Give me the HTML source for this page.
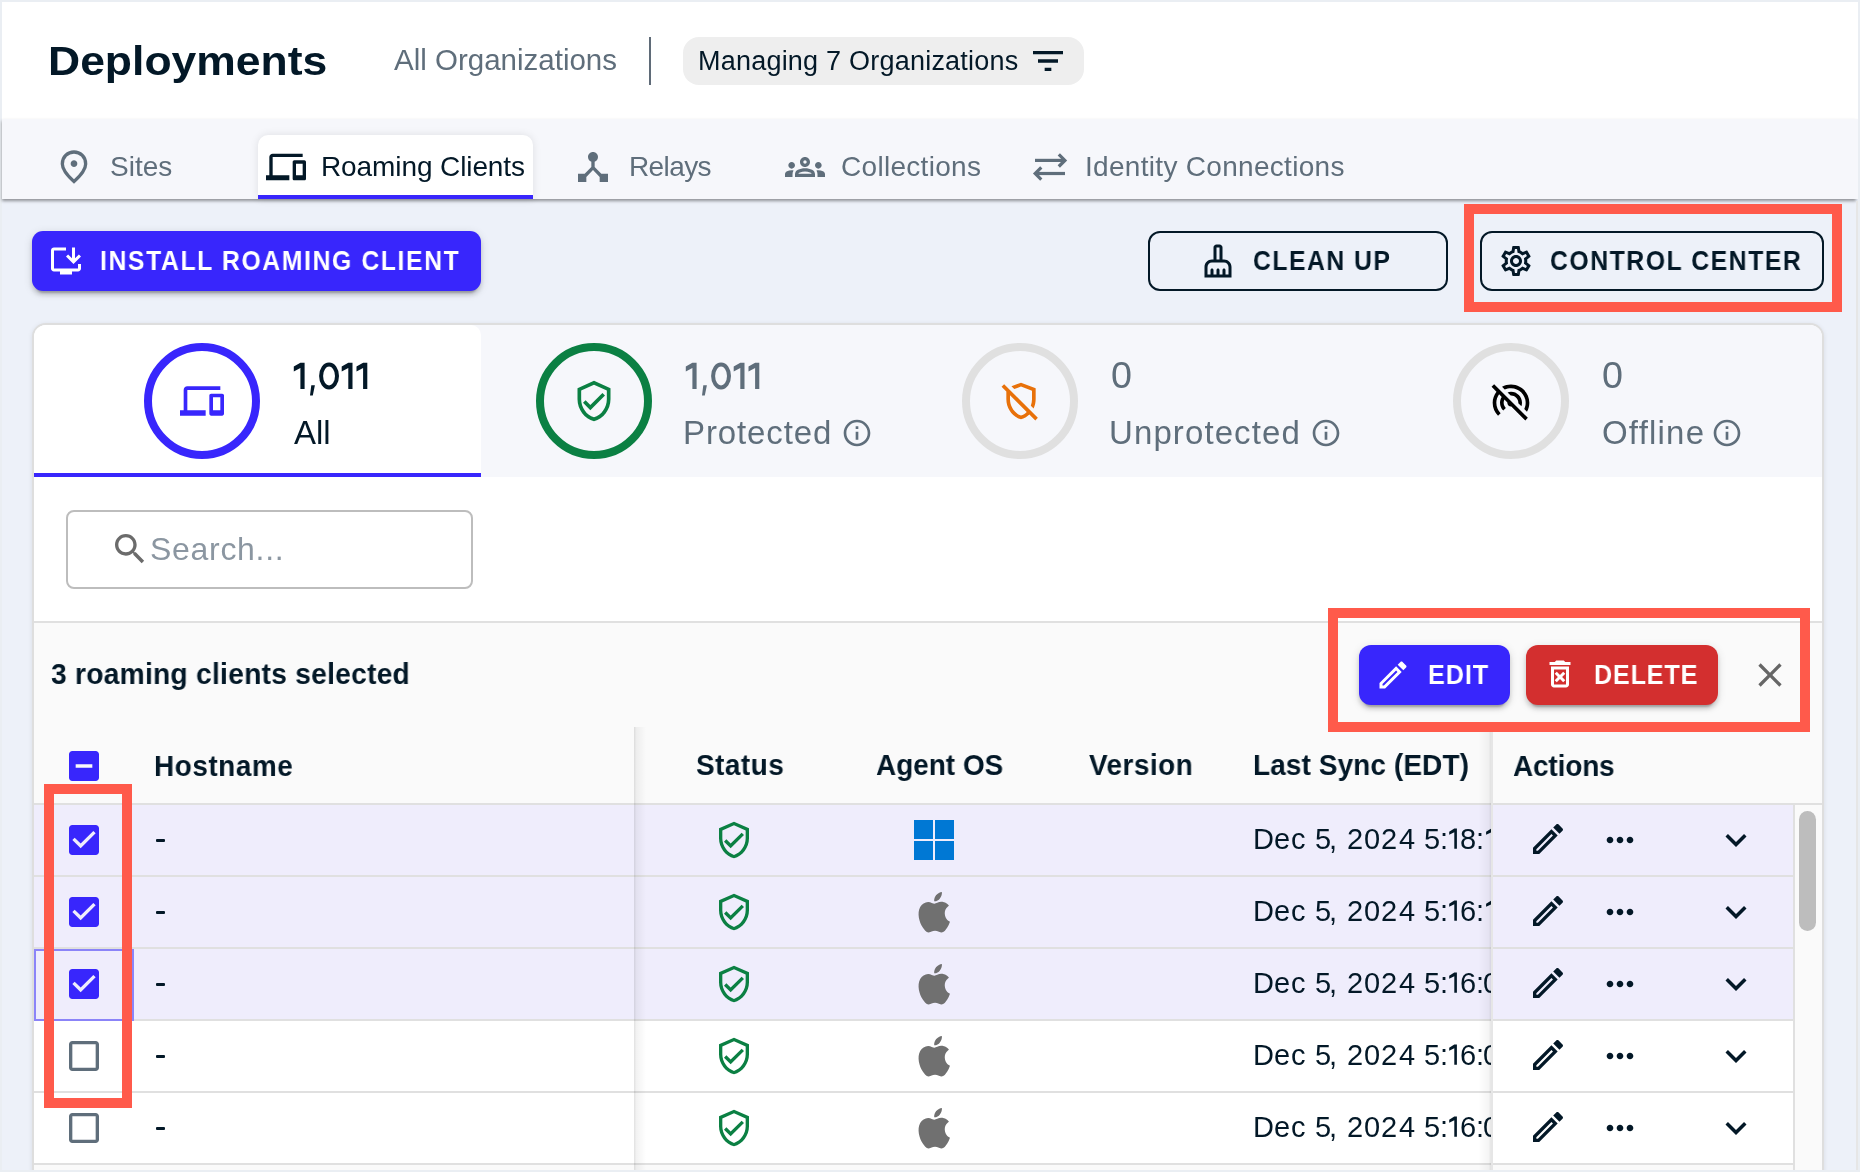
<!DOCTYPE html>
<html><head><meta charset="utf-8">
<style>
*{box-sizing:border-box;margin:0;padding:0}
html,body{width:1860px;height:1172px;overflow:hidden;background:#eaeef3;font-family:"Liberation Sans",sans-serif}
.a{position:absolute}
.t{position:absolute;line-height:1;white-space:pre;font-family:"Liberation Sans",sans-serif;will-change:transform}
svg.i{position:absolute;overflow:visible}
</style></head><body>
<div class="a" style="left:2px;top:2px;width:1856px;height:1168px;background:#edf1f9"></div>
<div class="a" style="left:2px;top:2px;width:1856px;height:117px;background:#fff"></div>
<div class="t" style="left:48px;top:41px;font-size:41px;font-weight:700;color:#031827;transform:scaleX(1.085);transform-origin:0 0">Deployments</div>
<div class="t" style="left:394px;top:45px;font-size:29.5px;font-weight:400;color:#5f6e7b">All Organizations</div>
<div class="a" style="left:649px;top:37px;width:2px;height:48px;background:#5f6b78"></div>
<div class="a" style="left:683px;top:37px;width:401px;height:48px;background:#eeeeee;border-radius:16px"></div>
<div class="t" style="left:698px;top:48px;font-size:27px;font-weight:400;color:#031827;letter-spacing:0.22px">Managing 7 Organizations</div>
<svg class="i" style="left:1028px;top:41px" width="40" height="40" viewBox="0 0 24 24" preserveAspectRatio="none"><path fill="#031827" d="M10 18h4v-2h-4v2zM3 6v2h18V6H3zm3 7h12v-2H6v2z"/></svg>
<div class="a" style="left:2px;top:119px;width:1854px;height:80px;background:#f6f7fb;box-shadow:0 2px 3px rgba(0,0,0,0.4)"></div>
<div class="a" style="left:1856px;top:119px;width:2px;height:80px;background:#f6f7fb"></div>
<div class="a" style="left:258px;top:135px;width:275px;height:64px;background:#fff;border-radius:10px 10px 0 0;box-shadow:0 0 8px rgba(0,0,0,0.10)"></div>
<div class="a" style="left:258px;top:195px;width:275px;height:4px;background:#3826fc"></div>
<svg class="i" style="left:54.1px;top:146.9px" width="40" height="40" viewBox="0 -960 960 960"><path fill="#5f6e7b" d="M480-480q33 0 56.5-23.5T560-560q0-33-23.5-56.5T480-640q-33 0-56.5 23.5T400-560q0 33 23.5 56.5T480-480Zm0 294q122-112 181-203.5T720-552q0-109-69.5-178.5T480-800q-101 0-170.5 69.5T240-552q0 71 59 162.5T480-186Zm0 106Q319-217 239.5-334.5T160-552q0-150 96.5-239T480-880q127 0 223.5 89T800-552q0 100-79.5 217.5T480-80Z"/></svg>
<div class="t" style="left:109.6px;top:153.2px;font-size:28px;font-weight:400;color:#5f6e7b">Sites</div>
<svg class="i" style="left:265.8px;top:147px" width="40" height="40" viewBox="0 0 24 24" preserveAspectRatio="none"><path fill="#031827" d="M4 6h18V4H4c-1.1 0-2 .9-2 2v11H0v3h14v-3H4V6zm19 2h-6c-.55 0-1 .45-1 1v10c0 .55.45 1 1 1h6c.55 0 1-.45 1-1V9c0-.55-.45-1-1-1zm-1 9h-4v-7h4v7z"/></svg>
<div class="t" style="left:321.4px;top:153.2px;font-size:28px;font-weight:400;color:#031827;letter-spacing:-0.1px">Roaming Clients</div>
<svg class="i" style="left:572.9px;top:147px" width="40" height="40" viewBox="0 0 24 24" preserveAspectRatio="none"><path fill="#5f6e7b" d="M17 16l-4-4V8.82C14.16 8.4 15 7.3 15 6c0-1.66-1.34-3-3-3S9 4.34 9 6c0 1.3.84 2.4 2 2.82V12l-4 4H3v5h5v-3.05l4-4.2 4 4.2V21h5v-5h-4z"/></svg>
<div class="t" style="left:629px;top:153.2px;font-size:28px;font-weight:400;color:#5f6e7b;letter-spacing:-0.6px">Relays</div>
<svg class="i" style="left:784.9px;top:147px" width="40" height="40" viewBox="0 0 24 24" preserveAspectRatio="none"><path fill="#5f6e7b" d="M4 13c1.1 0 2-.9 2-2s-.9-2-2-2-2 .9-2 2 .9 2 2 2zm1.13 1.1c-.37-.06-.74-.1-1.13-.1-.99 0-1.93.21-2.78.58C.48 14.9 0 15.62 0 16.43V18h4.5v-1.61c0-.83.23-1.61.63-2.29zM20 13c1.1 0 2-.9 2-2s-.9-2-2-2-2 .9-2 2 .9 2 2 2zm4 3.43c0-.81-.48-1.530-1.22-1.85-.85-.37-1.79-.58-2.78-.58-.39 0-.76.04-1.13.1.4.68.63 1.46.63 2.29V18H24v-1.57zm-7.76-2.78c-1.17-.52-2.61-.9-4.24-.9-1.63 0-3.07.39-4.24.9C6.68 14.13 6 15.21 6 16.39V18h12v-1.61c0-1.18-.68-2.26-1.76-2.74zM8.07 16c.09-.23.13-.39.91-.69.97-.38 1.99-.56 3.02-.56s2.05.18 3.02.56c.77.3.81.46.91.69H8.07zM12 8c.55 0 1 .45 1 1s-.45 1-1 1-1-.45-1-1 .45-1 1-1m0-2c-1.66 0-3 1.34-3 3s1.34 3 3 3 3-1.34 3-3-1.34-3-3-3z"/></svg>
<div class="t" style="left:841px;top:153.2px;font-size:28px;font-weight:400;color:#5f6e7b;letter-spacing:0.3px">Collections</div>
<svg class="i" style="left:1025px;top:145px" width="50" height="42" viewBox="1025 145 50 42"><g fill="none" stroke="#5f6e7b" stroke-width="3.2"><path d="M1035 160.4H1063.5"/><path d="M1058.8 154.3L1064.9 160.4L1058.8 166.5"/><path d="M1037 173.5H1065"/><path d="M1041.3 167.4L1035.2 173.5L1041.3 179.6"/></g></svg>
<div class="t" style="left:1085px;top:153.2px;font-size:28px;font-weight:400;color:#5f6e7b;letter-spacing:0.3px">Identity Connections</div>
<div class="a" style="left:32px;top:231px;width:449px;height:60px;background:#3826fc;border-radius:11px;box-shadow:0 6px 2px -4px rgba(0,0,0,.2),0 4px 4px 0 rgba(0,0,0,.14),0 2px 10px 0 rgba(0,0,0,.12)"></div>
<svg class="i" style="left:48px;top:242.5px" width="36" height="36" viewBox="0 0 24 24" preserveAspectRatio="none"><path fill="#fff" d="M20 17H4V5h8V3H4c-1.11 0-2 .89-2 2v12c0 1.1.89 2 2 2h4v2h8v-2h4c1.1 0 2-.9 2-2v-3h-2v3zM17 14l5-5-1.41-1.41L18 10.17V3h-2v7.17l-2.59-2.58L12 9z"/></svg>
<div class="t" style="left:99.5px;top:246.6px;font-size:27.5px;font-weight:700;color:#fff;letter-spacing:1.79px;transform:scaleX(0.9);transform-origin:0 0">INSTALL ROAMING CLIENT</div>
<div class="a" style="left:1148px;top:231px;width:300px;height:60px;border:2px solid #031827;border-radius:12px"></div>
<svg class="i" style="left:1199.8px;top:242.7px" width="36" height="36" viewBox="0 0 24 24" preserveAspectRatio="none"><path fill="#031827" d="M16 11h-1V3c0-1.1-.9-2-2-2h-2c-1.1 0-2 .9-2 2v8H8c-2.76 0-5 2.24-5 5v7h18v-7c0-2.76-2.24-5-5-5zm-5-8h2v8h-2V3zm8 18h-2v-3c0-.55-.45-1-1-1s-1 .45-1 1v3h-2v-3c0-.55-.45-1-1-1s-1 .45-1 1v3H9v-3c0-.55-.45-1-1-1s-1 .45-1 1v3H5v-5c0-1.65 1.35-3 3-3h8c1.65 0 3 1.35 3 3v5z"/></svg>
<div class="t" style="left:1252.5px;top:246.6px;font-size:27.5px;font-weight:700;color:#031827;letter-spacing:1.66px;transform:scaleX(0.9);transform-origin:0 0">CLEAN UP</div>
<div class="a" style="left:1480px;top:231px;width:344px;height:60px;border:2px solid #031827;border-radius:12px"></div>
<svg class="i" style="left:1498px;top:243.2px" width="36" height="36" viewBox="0 0 24 24" preserveAspectRatio="none"><path fill="#031827" d="M19.43 12.98c.04-.32.07-.64.07-.98 0-.34-.03-.66-.07-.98l2.11-1.65c.19-.15.24-.42.12-.64l-2-3.46c-.09-.16-.26-.25-.44-.25-.06 0-.12.01-.17.03l-2.49 1c-.52-.4-1.08-.73-1.69-.98l-.38-2.65C14.46 2.18 14.25 2 14 2h-4c-.25 0-.46.18-.49.42l-.38 2.65c-.61.25-1.17.59-1.69.98l-2.49-1c-.06-.02-.12-.03-.18-.03-.17 0-.34.09-.43.25l-2 3.46c-.13.22-.07.49.12.64l2.11 1.65c-.04.32-.07.65-.07.98 0 .33.03.66.07.98l-2.11 1.65c-.19.15-.24.42-.12.64l2 3.46c.09.16.26.25.44.25.06 0 .12-.01.17-.03l2.49-1c.52.4 1.08.73 1.69.98l.38 2.65c.03.24.24.42.49.42h4c.25 0 .46-.18.49-.42l.38-2.65c.61-.25 1.17-.59 1.69-.98l2.49 1c.06.02.12.03.18.03.17 0 .34-.09.43-.25l2-3.46c.12-.22.07-.49-.12-.64l-2.11-1.65zm-1.98-1.71c.04.31.05.52.05.73 0 .21-.02.43-.05.73l-.14 1.13.89.7 1.08.84-.7 1.21-1.27-.51-1.04-.42-.9.68c-.43.32-.84.56-1.25.73l-1.06.43-.16 1.13-.2 1.35h-1.4l-.19-1.35-.16-1.13-1.06-.43c-.43-.18-.83-.41-1.23-.71l-.91-.7-1.06.43-1.27.51-.7-1.21 1.08-.84.89-.7-.14-1.13c-.03-.31-.05-.54-.05-.74s.02-.43.05-.73l.14-1.13-.89-.7-1.08-.84.7-1.21 1.27.51 1.04.42.9-.68c.43-.32.84-.56 1.25-.73l1.06-.43.16-1.13.2-1.35h1.39l.19 1.35.16 1.13 1.06.43c.43.18.83.41 1.23.71l.91.7 1.06-.43 1.27-.51.7 1.21-1.07.85-.89.7.14 1.13zM12 8c-2.21 0-4 1.79-4 4s1.79 4 4 4 4-1.79 4-4-1.79-4-4-4zm0 6c-1.1 0-2-.9-2-2s.9-2 2-2 2 .9 2 2-.9 2-2 2z"/></svg>
<div class="t" style="left:1549.5px;top:246.6px;font-size:27.5px;font-weight:700;color:#031827;letter-spacing:1.73px;transform:scaleX(0.9);transform-origin:0 0">CONTROL CENTER</div>
<div class="a" style="left:32px;top:323px;width:1792px;height:900px;background:#fff;border:2px solid #dedede;border-radius:14px;box-shadow:0 1px 5px rgba(0,0,0,.09)"></div>
<div class="a" style="left:34px;top:325px;width:1788px;height:152px;background:#f6f7fb;border-radius:12px 12px 0 0"></div>
<div class="a" style="left:34px;top:325px;width:447px;height:152px;background:#fff;border-radius:12px 10px 0 0"></div>
<div class="a" style="left:34px;top:473px;width:447px;height:4px;background:#3826fc"></div>
<div class="a" style="left:144px;top:343px;width:116px;height:116px;border:8px solid #3826fc;border-radius:50%"></div>
<div class="a" style="left:536px;top:343px;width:116px;height:116px;border:8px solid #0b8043;border-radius:50%"></div>
<div class="a" style="left:962px;top:343px;width:116px;height:116px;border:8px solid #e0e0e0;border-radius:50%"></div>
<div class="a" style="left:1453px;top:343px;width:116px;height:116px;border:8px solid #e0e0e0;border-radius:50%"></div>
<svg class="i" style="left:180px;top:378.6px" width="44" height="44" viewBox="0 0 24 24" preserveAspectRatio="none"><path fill="#3826fc" d="M4 6h18V4H4c-1.1 0-2 .9-2 2v11H0v3h14v-3H4V6zm19 2h-6c-.55 0-1 .45-1 1v10c0 .55.45 1 1 1h6c.55 0 1-.45 1-1V9c0-.55-.45-1-1-1zm-1 9h-4v-7h4v7z"/></svg>
<svg class="i" style="left:572px;top:379.2px" width="44" height="44" viewBox="0 0 24 24" preserveAspectRatio="none"><path fill="#0b8043" d="M12 1 3 5v6c0 5.55 3.84 10.74 9 12 5.16-1.26 9-6.45 9-12V5l-9-4zm7 10c0 4.52-2.98 8.69-7 9.93-4.02-1.24-7-5.41-7-9.93V6.3l7-3.11 7 3.11V11zm-11.59.59L6 13l4 4 8-8-1.41-1.42L10 14.17z"/></svg>
<svg class="i" style="left:998.5px;top:378.8px" width="44" height="44" viewBox="0 0 24 24" preserveAspectRatio="none"><path fill="#e8710a" d="M12 4.14l6 2.25v4.7c0 1.19-.23 2.36-.64 3.44l1.51 1.51c.72-1.53 1.13-3.22 1.13-4.95V5l-8-3-5.22 1.96 1.55 1.55L12 4.14zM2.81 2.81 1.39 4.22 4 6.83v4.26c0 5.05 3.41 9.76 8 10.91 1.72-.43 3.28-1.36 4.55-2.62l3.23 3.23 1.41-1.41L2.81 2.81zM12 19.92c-3.45-1.13-6-4.82-6-8.83V8.83l9.14 9.14c-.9.88-1.97 1.56-3.14 1.95z"/></svg>
<svg class="i" style="left:1489px;top:378.8px" width="44" height="44" viewBox="0 0 24 24" preserveAspectRatio="none"><path fill="#000" d="M2.81 2.81 1.39 4.22l2.69 2.69C2.78 8.6 2 10.71 2 13c0 2.76 1.12 5.26 2.93 7.07l1.42-1.42C4.9 17.21 4 15.21 4 13c0-1.75.57-3.35 1.51-4.66l1.43 1.43C6.35 10.7 6 11.81 6 13c0 1.66.67 3.16 1.76 4.24l1.42-1.42C8.45 15.1 8 14.11 8 13c0-.63.15-1.23.41-1.76l1.61 1.61c0 .05-.02.1-.02.15 0 .55.23 1.05.59 1.41.36.36.86.59 1.41.59.05 0 .1-.01.16-.02l7.62 7.62 1.41-1.41L2.81 2.81zM17.7 14.87c.19-.59.3-1.22.3-1.87 0-3.31-2.69-6-6-6-.65 0-1.28.1-1.87.3l1.71 1.71C11.89 9 11.95 9 12 9c2.21 0 4 1.79 4 4 0 .05 0 .11-.01.16l1.71 1.71zM12 5c4.42 0 8 3.58 8 8 0 1.22-.27 2.37-.77 3.4l1.49 1.49C21.53 16.45 22 14.78 22 13c0-5.52-4.48-10-10-10-1.78 0-3.44.46-4.89 1.28l1.48 1.48C9.63 5.27 10.78 5 12 5z"/></svg>
<svg class="i" style="left:0px;top:0px" width="400" height="400" viewBox="0 0 400 400"><path fill="#031827" d="M293.79999999999995 366.5L300.4 362.7H304.59999999999997V388.9H300.4V367.9L293.79999999999995 371.4ZM341.7 366.5L348.3 362.7H352.5V388.9H348.3V367.9L341.7 371.4ZM356.5 366.5L363.1 362.7H367.3V388.9H363.1V367.9L356.5 371.4ZM311.3 385.2H314.9L312.8 395.5H310Z"/><ellipse cx="329.05" cy="375.95" rx="7.95" ry="11.45" fill="none" stroke="#031827" stroke-width="4"/></svg>
<div class="t" style="left:293.8px;top:416px;font-size:33px;font-weight:400;color:#031827">All</div>
<svg class="i" style="left:391.6px;top:0px" width="400" height="400" viewBox="0 0 400 400"><path fill="#5f6e7b" d="M293.79999999999995 366.5L300.4 362.7H304.59999999999997V388.9H300.4V367.9L293.79999999999995 371.4ZM341.7 366.5L348.3 362.7H352.5V388.9H348.3V367.9L341.7 371.4ZM356.5 366.5L363.1 362.7H367.3V388.9H363.1V367.9L356.5 371.4ZM311.3 385.2H314.9L312.8 395.5H310Z"/><ellipse cx="329.05" cy="375.95" rx="7.95" ry="11.45" fill="none" stroke="#5f6e7b" stroke-width="4"/></svg>
<div class="t" style="left:683px;top:416px;font-size:33px;font-weight:400;color:#5f6e7b;letter-spacing:0.9px">Protected</div>
<svg class="i" style="left:841px;top:417px" width="32" height="32" viewBox="0 0 24 24" preserveAspectRatio="none"><path fill="#5f6e7b" d="M11 7h2v2h-2zm0 4h2v6h-2zm1-9C6.48 2 2 6.48 2 12s4.48 10 10 10 10-4.48 10-10S17.52 2 12 2zm0 18c-4.41 0-8-3.59-8-8s3.59-8 8-8 8 3.59 8 8-3.59 8-8 8z"/></svg>
<div class="t" style="left:1110.5px;top:356.8px;font-size:37.7px;font-weight:400;color:#5f6e7b">0</div>
<div class="t" style="left:1108.5px;top:416px;font-size:33px;font-weight:400;color:#5f6e7b;letter-spacing:1.1px">Unprotected</div>
<svg class="i" style="left:1309.8px;top:417px" width="32" height="32" viewBox="0 0 24 24" preserveAspectRatio="none"><path fill="#5f6e7b" d="M11 7h2v2h-2zm0 4h2v6h-2zm1-9C6.48 2 2 6.48 2 12s4.48 10 10 10 10-4.48 10-10S17.52 2 12 2zm0 18c-4.41 0-8-3.59-8-8s3.59-8 8-8 8 3.59 8 8-3.59 8-8 8z"/></svg>
<div class="t" style="left:1601.5px;top:356.8px;font-size:37.7px;font-weight:400;color:#5f6e7b">0</div>
<div class="t" style="left:1601.5px;top:416px;font-size:33px;font-weight:400;color:#5f6e7b;letter-spacing:1.2px">Offline</div>
<svg class="i" style="left:1711.3px;top:417px" width="32" height="32" viewBox="0 0 24 24" preserveAspectRatio="none"><path fill="#5f6e7b" d="M11 7h2v2h-2zm0 4h2v6h-2zm1-9C6.48 2 2 6.48 2 12s4.48 10 10 10 10-4.48 10-10S17.52 2 12 2zm0 18c-4.41 0-8-3.59-8-8s3.59-8 8-8 8 3.59 8 8-3.59 8-8 8z"/></svg>
<div class="a" style="left:66px;top:510px;width:407px;height:79px;border:2px solid #bdbdbd;border-radius:8px"></div>
<svg class="i" style="left:110px;top:529px" width="40" height="40" viewBox="0 0 24 24" preserveAspectRatio="none"><path fill="#6b6b6b" d="M15.5 14h-.79l-.28-.27C15.41 12.59 16 11.11 16 9.5 16 5.91 13.09 3 9.5 3S3 5.91 3 9.5 5.91 16 9.5 16c1.61 0 3.09-.59 4.23-1.57l.27.28v.79l5 4.99L20.49 19l-4.99-5zm-6 0C7.01 14 5 11.99 5 9.5S7.01 5 9.5 5 14 7.01 14 9.5 11.99 14 9.5 14z"/></svg>
<div class="t" style="left:150px;top:532.6px;font-size:32px;font-weight:400;color:#8b96a1;letter-spacing:0.7px">Search...</div>
<div class="a" style="left:34px;top:621px;width:1788px;height:2px;background:#e0e0e0"></div>
<div class="a" style="left:34px;top:623px;width:1788px;height:560px;background:#fafafa"></div>
<div class="t" style="left:50.5px;top:658.6px;font-size:30px;font-weight:700;color:#031827;letter-spacing:0.26px;transform:scaleX(0.94);transform-origin:0 0">3 roaming clients selected</div>
<div class="a" style="left:1359px;top:645px;width:151px;height:60px;background:#3826fc;border-radius:12px;box-shadow:0 6px 2px -4px rgba(0,0,0,.2),0 4px 4px 0 rgba(0,0,0,.14),0 2px 10px 0 rgba(0,0,0,.12)"></div>
<svg class="i" style="left:1374.6px;top:657px" width="36" height="36" viewBox="0 0 24 24" preserveAspectRatio="none"><path fill="#fff" d="M14.06 9.02l.92.92L5.92 19H5v-.92l9.06-9.06M17.66 3c-.25 0-.51.1-.7.29l-1.83 1.83 3.75 3.75 1.83-1.83c.39-.39.39-1.02 0-1.41l-2.34-2.34c-.2-.2-.45-.29-.71-.29zm-3.6 3.19L3 17.25V21h3.75L17.81 9.94l-3.75-3.75z"/></svg>
<div class="t" style="left:1427.6px;top:661.1px;font-size:28px;font-weight:700;color:#fff;letter-spacing:1.06px;transform:scaleX(0.9);transform-origin:0 0">EDIT</div>
<div class="a" style="left:1526px;top:645px;width:192px;height:60px;background:#d32f2f;border-radius:12px;box-shadow:0 6px 2px -4px rgba(0,0,0,.2),0 4px 4px 0 rgba(0,0,0,.14),0 2px 10px 0 rgba(0,0,0,.12)"></div>
<svg class="i" style="left:1541.6px;top:656.4px" width="36" height="36" viewBox="0 0 24 24" preserveAspectRatio="none"><path fill="#fff" d="M14.12 10.47 12 12.59l-2.13-2.12-1.41 1.41L10.59 14l-2.12 2.12 1.41 1.41L12 15.41l2.12 2.12 1.41-1.41L13.41 14l2.12-2.12zM15.5 4l-1-1h-5l-1 1H5v2h14V4zM6 19c0 1.1.9 2 2 2h8c1.1 0 2-.9 2-2V7H6v12zM8 9h8v10H8V9z"/></svg>
<div class="t" style="left:1594px;top:661.1px;font-size:28px;font-weight:700;color:#fff;letter-spacing:0.87px;transform:scaleX(0.9);transform-origin:0 0">DELETE</div>
<svg class="i" style="left:1749.9px;top:655.4px" width="40" height="40" viewBox="0 0 24 24" preserveAspectRatio="none"><path fill="#666" d="M19 6.41 17.59 5 12 10.59 6.41 5 5 6.41 10.59 12 5 17.59 6.41 19 12 13.41 17.59 19 19 17.59 13.41 12z"/></svg>
<svg class="i" style="left:64px;top:746px" width="40" height="40" viewBox="0 0 24 24" preserveAspectRatio="none"><path fill="#3826fc" d="M19 3H5c-1.1 0-2 .9-2 2v14c0 1.1.9 2 2 2h14c1.1 0 2-.9 2-2V5c0-1.1-.9-2-2-2zm-2 10H7v-2h10v2z"/></svg>
<div class="t" style="left:153.8px;top:750.5px;font-size:30px;font-weight:700;color:#031827;letter-spacing:0.59px;transform:scaleX(0.93);transform-origin:0 0">Hostname</div>
<div class="t" style="left:696.2px;top:749.5px;font-size:30px;font-weight:700;color:#031827;letter-spacing:0.55px;transform:scaleX(0.93);transform-origin:0 0">Status</div>
<div class="t" style="left:876.3px;top:749.5px;font-size:30px;font-weight:700;color:#031827;letter-spacing:0.03px;transform:scaleX(0.93);transform-origin:0 0">Agent OS</div>
<div class="t" style="left:1089px;top:749.5px;font-size:30px;font-weight:700;color:#031827;letter-spacing:0.52px;transform:scaleX(0.93);transform-origin:0 0">Version</div>
<div class="t" style="left:1253.2px;top:749.5px;font-size:30px;font-weight:700;color:#031827;letter-spacing:0.15px;transform:scaleX(0.93);transform-origin:0 0">Last Sync (EDT)</div>
<div class="t" style="left:1513px;top:750.5px;font-size:30px;font-weight:700;color:#031827;letter-spacing:-0.12px;transform:scaleX(0.93);transform-origin:0 0">Actions</div>
<div class="a" style="left:34px;top:803px;width:1788px;height:2px;background:#e0e0e0"></div>
<div class="a" style="left:34px;top:805px;width:1759px;height:70px;background:#efedfc"></div>
<div class="a" style="left:34px;top:875px;width:1759px;height:2px;background:#e0e0e0"></div>
<svg class="i" style="left:64px;top:819.9px" width="40" height="40" viewBox="0 0 24 24" preserveAspectRatio="none"><path fill="#3826fc" d="M19 3H5c-1.11 0-2 .9-2 2v14c0 1.1.89 2 2 2h14c1.11 0 2-.9 2-2V5c0-1.1-.89-2-2-2zm-9 14l-5-5 1.41-1.41L10 14.17l7.59-7.59L19 8l-9 9z"/></svg>
<div class="a" style="left:156px;top:839px;width:9px;height:2.7px;background:#031827;border-radius:1px"></div>
<svg class="i" style="left:714.2px;top:820.3px" width="40" height="40" viewBox="0 0 24 24" preserveAspectRatio="none"><path fill="#0b8043" d="M12 1 3 5v6c0 5.55 3.84 10.74 9 12 5.16-1.26 9-6.45 9-12V5l-9-4zm7 10c0 4.52-2.98 8.69-7 9.93-4.02-1.24-7-5.41-7-9.93V6.3l7-3.11 7 3.11V11zm-11.59.59L6 13l4 4 8-8-1.41-1.42L10 14.17z"/></svg>
<div class="a" style="left:914px;top:819.5px;width:19px;height:19px;background:#0078d4"></div>
<div class="a" style="left:914px;top:840.5px;width:19px;height:19px;background:#0078d4"></div>
<div class="a" style="left:935px;top:819.5px;width:19px;height:19px;background:#0078d4"></div>
<div class="a" style="left:935px;top:840.5px;width:19px;height:19px;background:#0078d4"></div>
<div class="a" style="left:1240px;top:805px;width:251px;height:70px;overflow:hidden"><div class="t" style="left:13.35px;top:20.25px;font-size:29px;font-weight:400;color:#031827">D</div><div class="t" style="left:34.2px;top:20.25px;font-size:29px;font-weight:400;color:#031827">e</div><div class="t" style="left:50.95px;top:20.25px;font-size:29px;font-weight:400;color:#031827">c</div><div class="t" style="left:74.9px;top:20.25px;font-size:29px;font-weight:400;color:#031827">5</div><div class="t" style="left:89.45px;top:20.25px;font-size:29px;font-weight:400;color:#031827">,</div><div class="t" style="left:106.65px;top:20.25px;font-size:29px;font-weight:400;color:#031827">2</div><div class="t" style="left:124.05px;top:20.25px;font-size:29px;font-weight:400;color:#031827">0</div><div class="t" style="left:141.45px;top:20.25px;font-size:29px;font-weight:400;color:#031827">2</div><div class="t" style="left:158.65px;top:20.25px;font-size:29px;font-weight:400;color:#031827">4</div><div class="t" style="left:183.65px;top:20.25px;font-size:29px;font-weight:400;color:#031827">5</div><div class="t" style="left:199.7px;top:20.25px;font-size:29px;font-weight:400;color:#031827">:</div><svg class="i" style="left:0;top:0" width="251" height="70" viewBox="0 0 251 70"><path fill="#031827" d="M209.20 26.7L214.30 23.5H216.90V43.8H214.30V27.3L209.20 29.7Z"/></svg><div class="t" style="left:220.05px;top:20.25px;font-size:29px;font-weight:400;color:#031827">8</div><div class="t" style="left:236.45px;top:20.25px;font-size:29px;font-weight:400;color:#031827">:</div><svg class="i" style="left:0;top:0" width="251" height="70" viewBox="0 0 251 70"><path fill="#031827" d="M246.10 26.7L251.20 23.5H253.80V43.8H251.20V27.3L246.10 29.7Z"/></svg></div>
<svg class="i" style="left:1527.5px;top:819px" width="40" height="40" viewBox="0 0 24 24" preserveAspectRatio="none"><path fill="#031827" d="M14.06 9.02l.92.92L5.92 19H5v-.92l9.06-9.06M17.66 3c-.25 0-.51.1-.7.29l-1.83 1.83 3.75 3.75 1.83-1.83c.39-.39.39-1.02 0-1.41l-2.34-2.34c-.2-.2-.45-.29-.71-.29zm-3.6 3.19L3 17.25V21h3.75L17.81 9.94l-3.75-3.75z"/></svg>
<svg class="i" style="left:1600.3px;top:819.6px" width="40" height="40" viewBox="0 0 24 24" preserveAspectRatio="none"><path fill="#031827" d="M6 10c-1.1 0-2 .9-2 2s.9 2 2 2 2-.9 2-2-.9-2-2-2zm12 0c-1.1 0-2 .9-2 2s.9 2 2 2 2-.9 2-2-.9-2-2-2zm-6 0c-1.1 0-2 .9-2 2s.9 2 2 2 2-.9 2-2-.9-2-2-2z"/></svg>
<svg class="i" style="left:1714.9px;top:818.8px" width="42" height="42" viewBox="0 0 24 24" preserveAspectRatio="none"><path fill="#031827" d="M7.41 8.59 12 13.17l4.59-4.58L18 10l-6 6-6-6 1.41-1.41z"/></svg>
<div class="a" style="left:34px;top:877px;width:1759px;height:70px;background:#efedfc"></div>
<div class="a" style="left:34px;top:947px;width:1759px;height:2px;background:#e0e0e0"></div>
<svg class="i" style="left:64px;top:891.9px" width="40" height="40" viewBox="0 0 24 24" preserveAspectRatio="none"><path fill="#3826fc" d="M19 3H5c-1.11 0-2 .9-2 2v14c0 1.1.89 2 2 2h14c1.11 0 2-.9 2-2V5c0-1.1-.89-2-2-2zm-9 14l-5-5 1.41-1.41L10 14.17l7.59-7.59L19 8l-9 9z"/></svg>
<div class="a" style="left:156px;top:911px;width:9px;height:2.7px;background:#031827;border-radius:1px"></div>
<svg class="i" style="left:714.2px;top:892.3px" width="40" height="40" viewBox="0 0 24 24" preserveAspectRatio="none"><path fill="#0b8043" d="M12 1 3 5v6c0 5.55 3.84 10.74 9 12 5.16-1.26 9-6.45 9-12V5l-9-4zm7 10c0 4.52-2.98 8.69-7 9.93-4.02-1.24-7-5.41-7-9.93V6.3l7-3.11 7 3.11V11zm-11.59.59L6 13l4 4 8-8-1.41-1.42L10 14.17z"/></svg>
<svg class="i" style="left:914.5px;top:891.7px" width="38.5" height="40.5" viewBox="0 0 24 24" preserveAspectRatio="none"><path fill="#707070" d="M12.152 6.896c-.948 0-2.415-1.078-3.96-1.04-2.04.027-3.91 1.183-4.961 3.014-2.117 3.675-.546 9.103 1.519 12.09 1.013 1.454 2.208 3.09 3.792 3.039 1.52-.065 2.09-.987 3.935-.987 1.831 0 2.35.987 3.96.948 1.637-.026 2.676-1.48 3.676-2.948 1.156-1.688 1.636-3.325 1.662-3.415-.039-.013-3.182-1.221-3.22-4.857-.026-3.04 2.48-4.494 2.597-4.559-1.429-2.09-3.623-2.324-4.39-2.376-2-.156-3.675 1.09-4.61 1.09zM15.53 3.83c.843-1.012 1.4-2.427 1.245-3.83-1.207.052-2.662.805-3.532 1.818-.78.896-1.454 2.338-1.273 3.714 1.338.104 2.715-.688 3.559-1.701"/></svg>
<div class="a" style="left:1240px;top:877px;width:251px;height:70px;overflow:hidden"><div class="t" style="left:13.35px;top:20.25px;font-size:29px;font-weight:400;color:#031827">D</div><div class="t" style="left:34.2px;top:20.25px;font-size:29px;font-weight:400;color:#031827">e</div><div class="t" style="left:50.95px;top:20.25px;font-size:29px;font-weight:400;color:#031827">c</div><div class="t" style="left:74.9px;top:20.25px;font-size:29px;font-weight:400;color:#031827">5</div><div class="t" style="left:89.45px;top:20.25px;font-size:29px;font-weight:400;color:#031827">,</div><div class="t" style="left:106.65px;top:20.25px;font-size:29px;font-weight:400;color:#031827">2</div><div class="t" style="left:124.05px;top:20.25px;font-size:29px;font-weight:400;color:#031827">0</div><div class="t" style="left:141.45px;top:20.25px;font-size:29px;font-weight:400;color:#031827">2</div><div class="t" style="left:158.65px;top:20.25px;font-size:29px;font-weight:400;color:#031827">4</div><div class="t" style="left:183.65px;top:20.25px;font-size:29px;font-weight:400;color:#031827">5</div><div class="t" style="left:199.7px;top:20.25px;font-size:29px;font-weight:400;color:#031827">:</div><svg class="i" style="left:0;top:0" width="251" height="70" viewBox="0 0 251 70"><path fill="#031827" d="M209.20 26.7L214.30 23.5H216.90V43.8H214.30V27.3L209.20 29.7Z"/></svg><div class="t" style="left:220.05px;top:20.25px;font-size:29px;font-weight:400;color:#031827">6</div><div class="t" style="left:236.45px;top:20.25px;font-size:29px;font-weight:400;color:#031827">:</div><svg class="i" style="left:0;top:0" width="251" height="70" viewBox="0 0 251 70"><path fill="#031827" d="M246.10 26.7L251.20 23.5H253.80V43.8H251.20V27.3L246.10 29.7Z"/></svg></div>
<svg class="i" style="left:1527.5px;top:891px" width="40" height="40" viewBox="0 0 24 24" preserveAspectRatio="none"><path fill="#031827" d="M14.06 9.02l.92.92L5.92 19H5v-.92l9.06-9.06M17.66 3c-.25 0-.51.1-.7.29l-1.83 1.83 3.75 3.75 1.83-1.83c.39-.39.39-1.02 0-1.41l-2.34-2.34c-.2-.2-.45-.29-.71-.29zm-3.6 3.19L3 17.25V21h3.75L17.81 9.94l-3.75-3.75z"/></svg>
<svg class="i" style="left:1600.3px;top:891.6px" width="40" height="40" viewBox="0 0 24 24" preserveAspectRatio="none"><path fill="#031827" d="M6 10c-1.1 0-2 .9-2 2s.9 2 2 2 2-.9 2-2-.9-2-2-2zm12 0c-1.1 0-2 .9-2 2s.9 2 2 2 2-.9 2-2-.9-2-2-2zm-6 0c-1.1 0-2 .9-2 2s.9 2 2 2 2-.9 2-2-.9-2-2-2z"/></svg>
<svg class="i" style="left:1714.9px;top:890.8px" width="42" height="42" viewBox="0 0 24 24" preserveAspectRatio="none"><path fill="#031827" d="M7.41 8.59 12 13.17l4.59-4.58L18 10l-6 6-6-6 1.41-1.41z"/></svg>
<div class="a" style="left:34px;top:949px;width:1759px;height:70px;background:#efedfc"></div>
<div class="a" style="left:34px;top:1019px;width:1759px;height:2px;background:#e0e0e0"></div>
<svg class="i" style="left:64px;top:963.9px" width="40" height="40" viewBox="0 0 24 24" preserveAspectRatio="none"><path fill="#3826fc" d="M19 3H5c-1.11 0-2 .9-2 2v14c0 1.1.89 2 2 2h14c1.11 0 2-.9 2-2V5c0-1.1-.89-2-2-2zm-9 14l-5-5 1.41-1.41L10 14.17l7.59-7.59L19 8l-9 9z"/></svg>
<div class="a" style="left:156px;top:983px;width:9px;height:2.7px;background:#031827;border-radius:1px"></div>
<svg class="i" style="left:714.2px;top:964.3px" width="40" height="40" viewBox="0 0 24 24" preserveAspectRatio="none"><path fill="#0b8043" d="M12 1 3 5v6c0 5.55 3.84 10.74 9 12 5.16-1.26 9-6.45 9-12V5l-9-4zm7 10c0 4.52-2.98 8.69-7 9.93-4.02-1.24-7-5.41-7-9.93V6.3l7-3.11 7 3.11V11zm-11.59.59L6 13l4 4 8-8-1.41-1.42L10 14.17z"/></svg>
<svg class="i" style="left:914.5px;top:963.7px" width="38.5" height="40.5" viewBox="0 0 24 24" preserveAspectRatio="none"><path fill="#707070" d="M12.152 6.896c-.948 0-2.415-1.078-3.96-1.04-2.04.027-3.91 1.183-4.961 3.014-2.117 3.675-.546 9.103 1.519 12.09 1.013 1.454 2.208 3.09 3.792 3.039 1.52-.065 2.09-.987 3.935-.987 1.831 0 2.35.987 3.96.948 1.637-.026 2.676-1.48 3.676-2.948 1.156-1.688 1.636-3.325 1.662-3.415-.039-.013-3.182-1.221-3.22-4.857-.026-3.04 2.48-4.494 2.597-4.559-1.429-2.09-3.623-2.324-4.39-2.376-2-.156-3.675 1.09-4.61 1.09zM15.53 3.83c.843-1.012 1.4-2.427 1.245-3.83-1.207.052-2.662.805-3.532 1.818-.78.896-1.454 2.338-1.273 3.714 1.338.104 2.715-.688 3.559-1.701"/></svg>
<div class="a" style="left:1240px;top:949px;width:251px;height:70px;overflow:hidden"><div class="t" style="left:13.35px;top:20.25px;font-size:29px;font-weight:400;color:#031827">D</div><div class="t" style="left:34.2px;top:20.25px;font-size:29px;font-weight:400;color:#031827">e</div><div class="t" style="left:50.95px;top:20.25px;font-size:29px;font-weight:400;color:#031827">c</div><div class="t" style="left:74.9px;top:20.25px;font-size:29px;font-weight:400;color:#031827">5</div><div class="t" style="left:89.45px;top:20.25px;font-size:29px;font-weight:400;color:#031827">,</div><div class="t" style="left:106.65px;top:20.25px;font-size:29px;font-weight:400;color:#031827">2</div><div class="t" style="left:124.05px;top:20.25px;font-size:29px;font-weight:400;color:#031827">0</div><div class="t" style="left:141.45px;top:20.25px;font-size:29px;font-weight:400;color:#031827">2</div><div class="t" style="left:158.65px;top:20.25px;font-size:29px;font-weight:400;color:#031827">4</div><div class="t" style="left:183.65px;top:20.25px;font-size:29px;font-weight:400;color:#031827">5</div><div class="t" style="left:199.7px;top:20.25px;font-size:29px;font-weight:400;color:#031827">:</div><svg class="i" style="left:0;top:0" width="251" height="70" viewBox="0 0 251 70"><path fill="#031827" d="M209.20 26.7L214.30 23.5H216.90V43.8H214.30V27.3L209.20 29.7Z"/></svg><div class="t" style="left:220.05px;top:20.25px;font-size:29px;font-weight:400;color:#031827">6</div><div class="t" style="left:236.45px;top:20.25px;font-size:29px;font-weight:400;color:#031827">:</div><div class="t" style="left:243px;top:20.25px;font-size:29px;font-weight:400;color:#031827">0</div></div>
<svg class="i" style="left:1527.5px;top:963px" width="40" height="40" viewBox="0 0 24 24" preserveAspectRatio="none"><path fill="#031827" d="M14.06 9.02l.92.92L5.92 19H5v-.92l9.06-9.06M17.66 3c-.25 0-.51.1-.7.29l-1.83 1.83 3.75 3.75 1.83-1.83c.39-.39.39-1.02 0-1.41l-2.34-2.34c-.2-.2-.45-.29-.71-.29zm-3.6 3.19L3 17.25V21h3.75L17.81 9.94l-3.75-3.75z"/></svg>
<svg class="i" style="left:1600.3px;top:963.6px" width="40" height="40" viewBox="0 0 24 24" preserveAspectRatio="none"><path fill="#031827" d="M6 10c-1.1 0-2 .9-2 2s.9 2 2 2 2-.9 2-2-.9-2-2-2zm12 0c-1.1 0-2 .9-2 2s.9 2 2 2 2-.9 2-2-.9-2-2-2zm-6 0c-1.1 0-2 .9-2 2s.9 2 2 2 2-.9 2-2-.9-2-2-2z"/></svg>
<svg class="i" style="left:1714.9px;top:962.8px" width="42" height="42" viewBox="0 0 24 24" preserveAspectRatio="none"><path fill="#031827" d="M7.41 8.59 12 13.17l4.59-4.58L18 10l-6 6-6-6 1.41-1.41z"/></svg>
<div class="a" style="left:34px;top:1021px;width:1759px;height:70px;background:#fff"></div>
<div class="a" style="left:34px;top:1091px;width:1759px;height:2px;background:#e0e0e0"></div>
<svg class="i" style="left:64px;top:1035.9px" width="40" height="40" viewBox="0 0 24 24" preserveAspectRatio="none"><path fill="#5f6e7b" d="M19 5v14H5V5h14m0-2H5c-1.1 0-2 .9-2 2v14c0 1.1.9 2 2 2h14c1.1 0 2-.9 2-2V5c0-1.1-.9-2-2-2z"/></svg>
<div class="a" style="left:156px;top:1055px;width:9px;height:2.7px;background:#031827;border-radius:1px"></div>
<svg class="i" style="left:714.2px;top:1036.3px" width="40" height="40" viewBox="0 0 24 24" preserveAspectRatio="none"><path fill="#0b8043" d="M12 1 3 5v6c0 5.55 3.84 10.74 9 12 5.16-1.26 9-6.45 9-12V5l-9-4zm7 10c0 4.52-2.98 8.69-7 9.93-4.02-1.24-7-5.41-7-9.93V6.3l7-3.11 7 3.11V11zm-11.59.59L6 13l4 4 8-8-1.41-1.42L10 14.17z"/></svg>
<svg class="i" style="left:914.5px;top:1035.7px" width="38.5" height="40.5" viewBox="0 0 24 24" preserveAspectRatio="none"><path fill="#707070" d="M12.152 6.896c-.948 0-2.415-1.078-3.96-1.04-2.04.027-3.91 1.183-4.961 3.014-2.117 3.675-.546 9.103 1.519 12.09 1.013 1.454 2.208 3.09 3.792 3.039 1.52-.065 2.09-.987 3.935-.987 1.831 0 2.35.987 3.96.948 1.637-.026 2.676-1.48 3.676-2.948 1.156-1.688 1.636-3.325 1.662-3.415-.039-.013-3.182-1.221-3.22-4.857-.026-3.04 2.48-4.494 2.597-4.559-1.429-2.09-3.623-2.324-4.39-2.376-2-.156-3.675 1.09-4.61 1.09zM15.53 3.83c.843-1.012 1.4-2.427 1.245-3.83-1.207.052-2.662.805-3.532 1.818-.78.896-1.454 2.338-1.273 3.714 1.338.104 2.715-.688 3.559-1.701"/></svg>
<div class="a" style="left:1240px;top:1021px;width:251px;height:70px;overflow:hidden"><div class="t" style="left:13.35px;top:20.25px;font-size:29px;font-weight:400;color:#031827">D</div><div class="t" style="left:34.2px;top:20.25px;font-size:29px;font-weight:400;color:#031827">e</div><div class="t" style="left:50.95px;top:20.25px;font-size:29px;font-weight:400;color:#031827">c</div><div class="t" style="left:74.9px;top:20.25px;font-size:29px;font-weight:400;color:#031827">5</div><div class="t" style="left:89.45px;top:20.25px;font-size:29px;font-weight:400;color:#031827">,</div><div class="t" style="left:106.65px;top:20.25px;font-size:29px;font-weight:400;color:#031827">2</div><div class="t" style="left:124.05px;top:20.25px;font-size:29px;font-weight:400;color:#031827">0</div><div class="t" style="left:141.45px;top:20.25px;font-size:29px;font-weight:400;color:#031827">2</div><div class="t" style="left:158.65px;top:20.25px;font-size:29px;font-weight:400;color:#031827">4</div><div class="t" style="left:183.65px;top:20.25px;font-size:29px;font-weight:400;color:#031827">5</div><div class="t" style="left:199.7px;top:20.25px;font-size:29px;font-weight:400;color:#031827">:</div><svg class="i" style="left:0;top:0" width="251" height="70" viewBox="0 0 251 70"><path fill="#031827" d="M209.20 26.7L214.30 23.5H216.90V43.8H214.30V27.3L209.20 29.7Z"/></svg><div class="t" style="left:220.05px;top:20.25px;font-size:29px;font-weight:400;color:#031827">6</div><div class="t" style="left:236.45px;top:20.25px;font-size:29px;font-weight:400;color:#031827">:</div><div class="t" style="left:243px;top:20.25px;font-size:29px;font-weight:400;color:#031827">0</div></div>
<svg class="i" style="left:1527.5px;top:1035px" width="40" height="40" viewBox="0 0 24 24" preserveAspectRatio="none"><path fill="#031827" d="M14.06 9.02l.92.92L5.92 19H5v-.92l9.06-9.06M17.66 3c-.25 0-.51.1-.7.29l-1.83 1.83 3.75 3.75 1.83-1.83c.39-.39.39-1.02 0-1.41l-2.34-2.34c-.2-.2-.45-.29-.71-.29zm-3.6 3.19L3 17.25V21h3.75L17.81 9.94l-3.75-3.75z"/></svg>
<svg class="i" style="left:1600.3px;top:1035.6px" width="40" height="40" viewBox="0 0 24 24" preserveAspectRatio="none"><path fill="#031827" d="M6 10c-1.1 0-2 .9-2 2s.9 2 2 2 2-.9 2-2-.9-2-2-2zm12 0c-1.1 0-2 .9-2 2s.9 2 2 2 2-.9 2-2-.9-2-2-2zm-6 0c-1.1 0-2 .9-2 2s.9 2 2 2 2-.9 2-2-.9-2-2-2z"/></svg>
<svg class="i" style="left:1714.9px;top:1034.8px" width="42" height="42" viewBox="0 0 24 24" preserveAspectRatio="none"><path fill="#031827" d="M7.41 8.59 12 13.17l4.59-4.58L18 10l-6 6-6-6 1.41-1.41z"/></svg>
<div class="a" style="left:34px;top:1093px;width:1759px;height:70px;background:#fff"></div>
<div class="a" style="left:34px;top:1163px;width:1759px;height:2px;background:#e0e0e0"></div>
<svg class="i" style="left:64px;top:1107.9px" width="40" height="40" viewBox="0 0 24 24" preserveAspectRatio="none"><path fill="#5f6e7b" d="M19 5v14H5V5h14m0-2H5c-1.1 0-2 .9-2 2v14c0 1.1.9 2 2 2h14c1.1 0 2-.9 2-2V5c0-1.1-.9-2-2-2z"/></svg>
<div class="a" style="left:156px;top:1127px;width:9px;height:2.7px;background:#031827;border-radius:1px"></div>
<svg class="i" style="left:714.2px;top:1108.3px" width="40" height="40" viewBox="0 0 24 24" preserveAspectRatio="none"><path fill="#0b8043" d="M12 1 3 5v6c0 5.55 3.84 10.74 9 12 5.16-1.26 9-6.45 9-12V5l-9-4zm7 10c0 4.52-2.98 8.69-7 9.93-4.02-1.24-7-5.41-7-9.93V6.3l7-3.11 7 3.11V11zm-11.59.59L6 13l4 4 8-8-1.41-1.42L10 14.17z"/></svg>
<svg class="i" style="left:914.5px;top:1107.7px" width="38.5" height="40.5" viewBox="0 0 24 24" preserveAspectRatio="none"><path fill="#707070" d="M12.152 6.896c-.948 0-2.415-1.078-3.96-1.04-2.04.027-3.91 1.183-4.961 3.014-2.117 3.675-.546 9.103 1.519 12.09 1.013 1.454 2.208 3.09 3.792 3.039 1.52-.065 2.09-.987 3.935-.987 1.831 0 2.35.987 3.96.948 1.637-.026 2.676-1.48 3.676-2.948 1.156-1.688 1.636-3.325 1.662-3.415-.039-.013-3.182-1.221-3.22-4.857-.026-3.04 2.48-4.494 2.597-4.559-1.429-2.09-3.623-2.324-4.39-2.376-2-.156-3.675 1.09-4.61 1.09zM15.53 3.83c.843-1.012 1.4-2.427 1.245-3.83-1.207.052-2.662.805-3.532 1.818-.78.896-1.454 2.338-1.273 3.714 1.338.104 2.715-.688 3.559-1.701"/></svg>
<div class="a" style="left:1240px;top:1093px;width:251px;height:70px;overflow:hidden"><div class="t" style="left:13.35px;top:20.25px;font-size:29px;font-weight:400;color:#031827">D</div><div class="t" style="left:34.2px;top:20.25px;font-size:29px;font-weight:400;color:#031827">e</div><div class="t" style="left:50.95px;top:20.25px;font-size:29px;font-weight:400;color:#031827">c</div><div class="t" style="left:74.9px;top:20.25px;font-size:29px;font-weight:400;color:#031827">5</div><div class="t" style="left:89.45px;top:20.25px;font-size:29px;font-weight:400;color:#031827">,</div><div class="t" style="left:106.65px;top:20.25px;font-size:29px;font-weight:400;color:#031827">2</div><div class="t" style="left:124.05px;top:20.25px;font-size:29px;font-weight:400;color:#031827">0</div><div class="t" style="left:141.45px;top:20.25px;font-size:29px;font-weight:400;color:#031827">2</div><div class="t" style="left:158.65px;top:20.25px;font-size:29px;font-weight:400;color:#031827">4</div><div class="t" style="left:183.65px;top:20.25px;font-size:29px;font-weight:400;color:#031827">5</div><div class="t" style="left:199.7px;top:20.25px;font-size:29px;font-weight:400;color:#031827">:</div><svg class="i" style="left:0;top:0" width="251" height="70" viewBox="0 0 251 70"><path fill="#031827" d="M209.20 26.7L214.30 23.5H216.90V43.8H214.30V27.3L209.20 29.7Z"/></svg><div class="t" style="left:220.05px;top:20.25px;font-size:29px;font-weight:400;color:#031827">6</div><div class="t" style="left:236.45px;top:20.25px;font-size:29px;font-weight:400;color:#031827">:</div><div class="t" style="left:243px;top:20.25px;font-size:29px;font-weight:400;color:#031827">0</div></div>
<svg class="i" style="left:1527.5px;top:1107px" width="40" height="40" viewBox="0 0 24 24" preserveAspectRatio="none"><path fill="#031827" d="M14.06 9.02l.92.92L5.92 19H5v-.92l9.06-9.06M17.66 3c-.25 0-.51.1-.7.29l-1.83 1.83 3.75 3.75 1.83-1.83c.39-.39.39-1.02 0-1.41l-2.34-2.34c-.2-.2-.45-.29-.71-.29zm-3.6 3.19L3 17.25V21h3.75L17.81 9.94l-3.75-3.75z"/></svg>
<svg class="i" style="left:1600.3px;top:1107.6px" width="40" height="40" viewBox="0 0 24 24" preserveAspectRatio="none"><path fill="#031827" d="M6 10c-1.1 0-2 .9-2 2s.9 2 2 2 2-.9 2-2-.9-2-2-2zm12 0c-1.1 0-2 .9-2 2s.9 2 2 2 2-.9 2-2-.9-2-2-2zm-6 0c-1.1 0-2 .9-2 2s.9 2 2 2 2-.9 2-2-.9-2-2-2z"/></svg>
<svg class="i" style="left:1714.9px;top:1106.8px" width="42" height="42" viewBox="0 0 24 24" preserveAspectRatio="none"><path fill="#031827" d="M7.41 8.59 12 13.17l4.59-4.58L18 10l-6 6-6-6 1.41-1.41z"/></svg>
<div class="a" style="left:634px;top:727px;width:12px;height:450px;background:linear-gradient(to right,rgba(0,0,0,.12),rgba(0,0,0,.05) 20%,rgba(0,0,0,0))"></div>
<div class="a" style="left:1479px;top:731px;width:12px;height:450px;background:linear-gradient(to left,rgba(0,0,0,.10),rgba(0,0,0,.04) 20%,rgba(0,0,0,0))"></div>
<div class="a" style="left:1491px;top:731px;width:1.5px;height:450px;background:#e6e6e6"></div>
<div class="a" style="left:1793px;top:805px;width:2px;height:380px;background:#e0e0e0"></div>
<div class="a" style="left:1799px;top:811px;width:17px;height:120px;background:#bdbdbd;border-radius:9px"></div>
<div class="a" style="left:34px;top:949px;width:100px;height:72px;border:2px solid #8b84f8"></div>
<div class="a" style="left:1464px;top:204px;width:378px;height:108px;border:10px solid #ff5a4b"></div>
<div class="a" style="left:1328px;top:608px;width:482px;height:124px;border:10px solid #ff5a4b"></div>
<div class="a" style="left:44px;top:784px;width:88px;height:324px;border:10px solid #ff5a4b"></div>
<div class="a" style="left:0px;top:1170px;width:1860px;height:2px;background:#eaeef3"></div>
<div class="a" style="left:1856px;top:201px;width:2px;height:969px;background:#e6e6e6"></div>
<div class="a" style="left:1858px;top:0px;width:2px;height:1172px;background:#eaeef3"></div>
</body></html>
